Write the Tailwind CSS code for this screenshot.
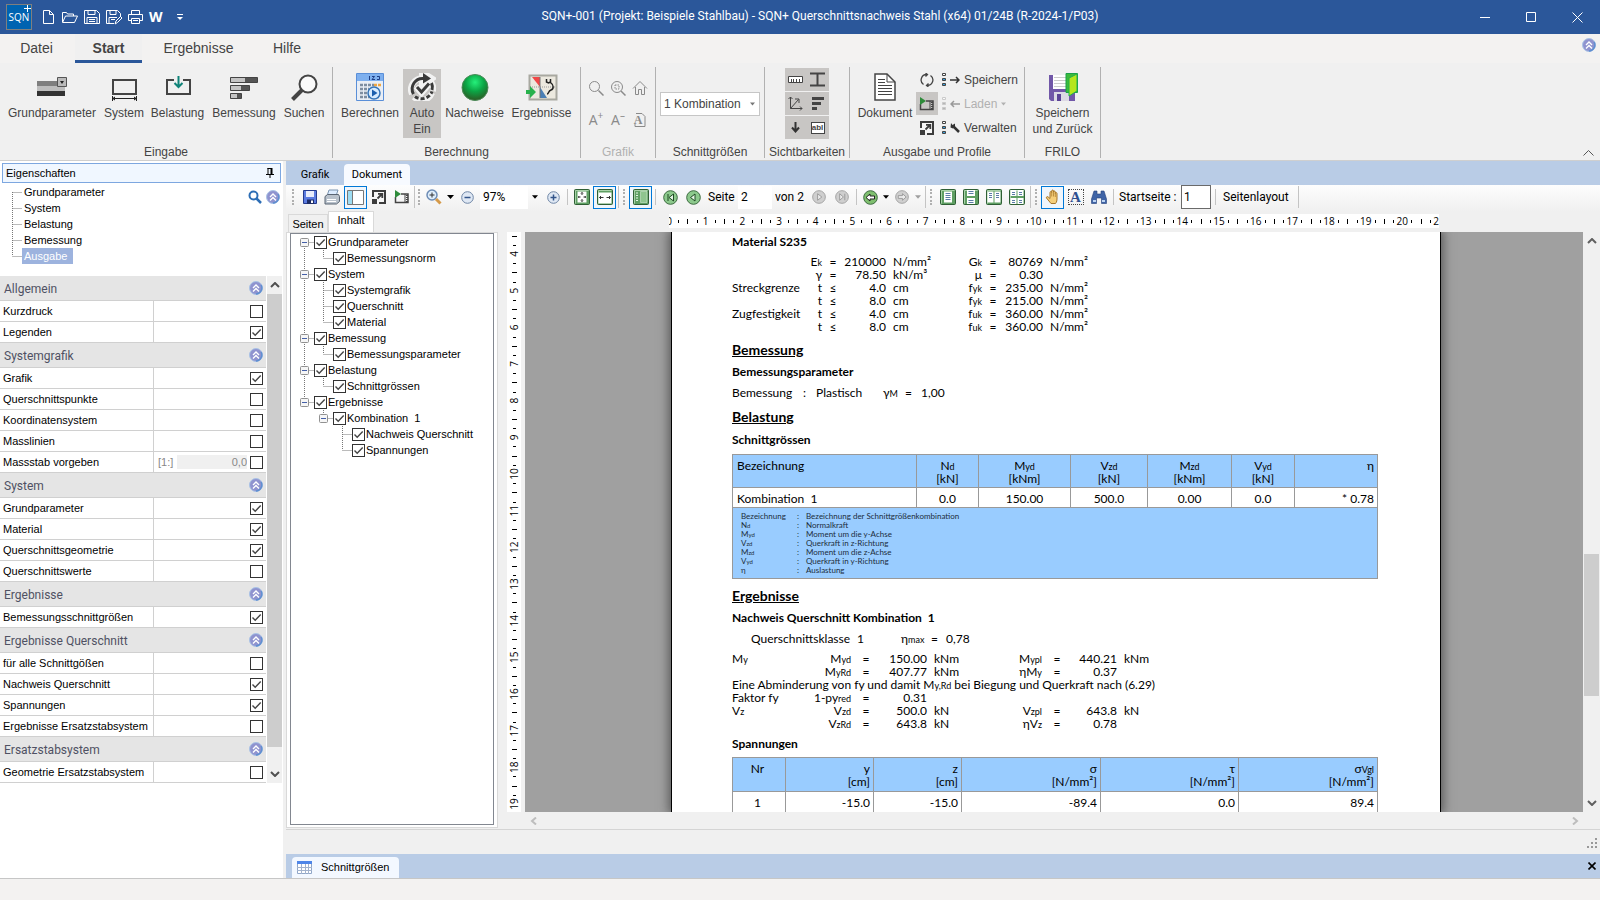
<!DOCTYPE html>
<html lang="de">
  <head>
    <meta charset="UTF-8" />
    <meta name="viewport" content="width=device-width, initial-scale=1.0" />
    <title>SQN+ Querschnittsnachweis Stahl</title>
    <script src="https://cdn.jsdelivr.net/npm/@tailwindcss/browser@4"></script>
  </head>
  <body class="flex h-screen flex-col overflow-hidden bg-[#f0f0f0] font-['Liberation_Sans',sans-serif] text-xs text-[#444]">

    <!-- Shared symbols -->
    <svg class="hidden">
      <symbol id="collapse" viewBox="0 0 14 14">
        <circle cx="7" cy="7" r="6.5" fill="#8f93cf" stroke="#a9c3e6" />
        <path d="M12 4a6 6 0 0 1-5 9" fill="none" stroke="#5f8fd0" stroke-width="1.4" />
        <path d="M4 7l3-3 3 3M4 10.5l3-3 3 3" fill="none" stroke="#fff" stroke-width="1.4" />
      </symbol>
      <symbol id="check" viewBox="0 0 13 13"><path d="M2.5 6.5l2.7 2.7L10.7 3.6" fill="none" stroke="#444" stroke-width="1.4" /></symbol>
      <symbol id="caret" viewBox="0 0 7 4"><path d="M0 0h7L3.5 4z" fill="currentColor" /></symbol>
      <symbol id="arrow-up" viewBox="0 0 10 6"><path d="M1 5l4-4 4 4" fill="none" stroke="currentColor" stroke-width="2" /></symbol>
      <symbol id="arrow-down" viewBox="0 0 10 6"><path d="M1 1l4 4 4-4" fill="none" stroke="currentColor" stroke-width="2" /></symbol>
      <symbol id="film" viewBox="0 0 16 14">
        <path d="M1.500 7v5.5h12.500V4H7" fill="none" stroke="#444" stroke-width="1.5" />
        <path d="M11 4v8.500" stroke="#444" />
        <path d="M13 5v7" stroke="#444" stroke-width="2" stroke-dasharray="1 1" />
        <path d="M1 0l6 4-6 4z" fill="#2e8b3a" />
      </symbol>
      <symbol id="resize" viewBox="0 0 14 14">
        <path d="M1 7V1h12v12H7" fill="#f6f6f6" stroke="#3c3c3c" stroke-width="2" />
        <path d="M0 9h5v5H0z" fill="#3c3c3c" />
        <path d="M5.500 8.500L10 4M6 3.800h4.300V8" fill="none" stroke="#3c3c3c" stroke-width="1.800" />
      </symbol>
      <symbol id="slots" viewBox="0 0 4 13">
        <path d="M.5 .5h3v2h-3z" fill="#fff" stroke="currentColor" />
        <path d="M.5 5.5h3v2h-3zM.5 10.5h3v2h-3z" fill="#39a0dc" stroke="currentColor" />
      </symbol>
      <symbol id="line-first" viewBox="0 0 19 16"><path d="M9.5 8v8M9.5 8.5h9.5" stroke="#777" stroke-dasharray="1 1" fill="none" /></symbol>
      <symbol id="line-v" viewBox="0 0 19 16"><path d="M9.5 0v16" stroke="#777" stroke-dasharray="1 1" /></symbol>
      <symbol id="line-t" viewBox="0 0 19 16"><path d="M9.5 0v16M9.5 8.5h9.5" stroke="#777" stroke-dasharray="1 1" /></symbol>
      <symbol id="line-l" viewBox="0 0 19 16"><path d="M9.5 0v8M9.5 8.5h9.5" stroke="#777" stroke-dasharray="1 1" /></symbol>
      <symbol id="box" viewBox="0 0 19 16"><rect x="5.5" y="4.5" width="8" height="8" rx="1" fill="#f6f6f6" stroke="#919191" /><path d="M7 8.5h5" stroke="#4560a8" /></symbol>
      <symbol id="page-green" viewBox="0 0 16 16"><rect x=".5" y=".5" width="15" height="15" rx="1" fill="#5f9f63" stroke="#2f5f35" /><path d="M1.5 14.5V1.5h13" stroke="#a9d2a9" fill="none" /></symbol>
    </svg>

    <!-- Title bar -->
    <header class="flex h-[34px] shrink-0 items-center bg-[#2b579a] text-white">
      <div class="flex w-[184px] items-center pl-1.5">
        <div class="relative flex size-[26px] items-center justify-center border border-[#7f7f7f] bg-[#0063b1] font-['Open_Sans',sans-serif] text-[10px] leading-none">SQN
          <svg class="absolute top-0 right-0 size-[7px]" viewBox="0 0 7 7"><path d="M3.5 0v7M0 3.5h7" stroke="#fff" /></svg>
        </div>
        <button aria-label="Neu" class="ml-[11px]"><svg class="h-4 w-[11px]" viewBox="0 0 11 16" fill="none" stroke="#fff"><path d="M.5 1.5h6l4 4v9H.5zM6.5 1.5v4h4" /></svg></button>
        <button aria-label="Öffnen" class="ml-2"><svg class="h-4 w-4" viewBox="0 0 16 16" fill="none" stroke="#fff"><path d="M.5 13V3.5h4l1 1.5h6v2M.5 13.5L3.5 7h12l-3 6.5z" /></svg></button>
        <button aria-label="Speichern" class="ml-1.5"><svg class="h-4 w-4" viewBox="0 0 16 16" fill="none" stroke="#fff"><path d="M.5 1.5h12l3 3v10H.5zM4 1.5v4h7v-4M3 14.5v-6h10v6M5 10.5h6M5 12.5h6" /></svg></button>
        <button aria-label="Speichern unter" class="ml-1.5"><svg class="h-4 w-[17px]" viewBox="0 0 17 16" fill="none" stroke="#fff"><path d="M8 14.5H.5v-13h11l3 3V8M4 1.5v4h6v-4M3 14.5v-6h8M5 10.5h4M9 15l1-3 4.5-4.5 1.5 1.5-4.5 4.5z" /></svg></button>
        <button aria-label="Drucken" class="ml-[5px]"><svg class="h-4 w-[15px]" viewBox="0 0 15 16" fill="none" stroke="#fff"><path d="M3.5 11.5h-3v-6h14v6h-3M3.5 5.5v-4h8v4M3.5 9.5h8v5h-8zM5 11.5h5" /></svg></button>
        <button class="ml-1.5 font-['Open_Sans',sans-serif] text-sm leading-none font-bold">W</button>
        <button aria-label="Anpassen" class="ml-[14px]"><svg class="h-[7px] w-[6px]" viewBox="0 0 6 7"><path d="M0 .5h6" stroke="#fff" /><path d="M0 3h6L3 6z" fill="#fff" /></svg></button>
      </div>
      <h1 class="flex-1 pr-1.5 pb-0.5 text-center font-[Roboto,sans-serif] text-xs">SQN+-001 (Projekt: Beispiele Stahlbau) - SQN+ Querschnittsnachweis Stahl (x64) 01/24B (R-2024-1/P03)</h1>
      <div class="flex">
        <button aria-label="Minimieren" class="flex h-[34px] w-[46px] items-center justify-center"><svg class="size-[11px]" viewBox="0 0 11 11"><path d="M0 5.5h10" stroke="#fff" /></svg></button>
        <button aria-label="Maximieren" class="flex h-[34px] w-[46px] items-center justify-center"><svg class="size-[11px]" viewBox="0 0 11 11" fill="none"><path d="M.5 .5h9v9h-9z" stroke="#fff" /></svg></button>
        <button aria-label="Schließen" class="flex h-[34px] w-[46px] items-center justify-center"><svg class="size-[11px]" viewBox="0 0 11 11"><path d="M.5 .5l10 10M10.5 .5l-10 10" stroke="#fff" /></svg></button>
      </div>
    </header>

    <!-- Ribbon tabs -->
    <nav class="flex h-[29px] shrink-0 items-stretch bg-[#f3f2f1] text-sm">
      <button class="w-[75px] pr-0.5 pb-0.5">Datei</button>
      <button class="w-[67px] border-b-[3px] border-[#2b579a] bg-[#f0f0f0] pt-0.5 font-bold">Start</button>
      <button class="w-[113px] pb-0.5">Ergebnisse</button>
      <button class="w-[64px] pb-0.5">Hilfe</button>
      <button aria-label="Menüband" class="mr-1 ml-auto self-start pt-1"><svg class="size-[14px]"><use href="#collapse" /></svg></button>
    </nav>

    <!-- Ribbon -->
    <section class="flex h-[98px] shrink-0 border-b border-[#cfcfcf] pt-1">
      <div class="flex h-[91px] w-[333px] flex-col justify-between border-r border-[#b1b1b1] pl-1">
        <div class="flex leading-4">
          <button class="flex w-24 flex-col items-center">
            <svg class="mt-1.5 mb-1 h-7 w-8" viewBox="0 0 32 28"><path d="M1 8h28v5H1z" fill="#7f7f7f" /><path d="M1 13h28v5H1z" fill="#bdbdbd" /><path d="M1 18h28v5H1z" fill="#333" /><path d="M21.5 4.5h9v9h-9z" fill="#bbb" stroke="#555" /><path d="M24 8h4l-2 3z" fill="#222" /></svg>
            Grundparameter
          </button>
          <button class="flex w-12 flex-col items-center">
            <svg class="mt-1.5 mb-1 h-7 w-8" viewBox="0 0 32 28" fill="none"><path d="M5 7h23v14H5z" stroke="#444" stroke-width="2" /><path d="M4 25.5h25M4.500 23v5M28.500 23v5" stroke="#222" /><path d="M4 25.5l3-2v4zM29 25.5l-3-2v4z" fill="#222" /></svg>
            System
          </button>
          <button class="flex w-[59px] flex-col items-center">
            <svg class="mt-1.5 mb-1 h-7 w-8" viewBox="0 0 32 28" fill="none"><path d="M12 7H5v14h23V7h-7" stroke="#444" stroke-width="2" /><path d="M16.5 3v11M12.5 10l4 4 4-4" stroke="#0f8378" stroke-width="2" /></svg>
            Belastung
          </button>
          <button class="flex w-[74px] flex-col items-center">
            <svg class="mt-1.5 mb-1 h-7 w-8" viewBox="0 0 32 28"><path d="M2.5 4.5h27v5h-27zM2.5 12.5h19v5h-19zM2.5 20.5h11v5h-11z" fill="#555" stroke="#444" /><path d="M3 5h14v4H3zM3 13h10v4H3zM3 21h6v4H3z" fill="#c4c4c4" /></svg>
            Bemessung
          </button>
          <button class="flex w-[46px] flex-col items-center">
            <svg class="mt-1.5 mb-1 h-7 w-7" viewBox="0 0 28 28" fill="none"><circle cx="18" cy="11" r="8.5" fill="#fafafa" stroke="#444" stroke-width="2" /><path d="M12 17l-9.5 9.5" stroke="#444" stroke-width="4" /></svg>
            Suchen
          </button>
        </div>
        <p class="pr-1 text-center leading-3">Eingabe</p>
      </div>

      <div class="flex h-[91px] w-[248px] flex-col justify-between border-r border-[#b1b1b1]">
        <div class="flex pl-1 leading-4">
          <button class="flex w-[66px] flex-col items-center">
            <svg class="mt-1.5 mb-1 h-7 w-7" viewBox="0 0 28 28"><path d="M.5 .5h27v27H.5z" fill="#e9eef5" stroke="#5a8fd8" /><path d="M1 1h26v7H1z" fill="#7eb0ef" /><path d="M13.5 3v4M16 3.5h2.5L16 6.500h3M21 3.500h2.5v3H21" stroke="#1d3f86" fill="none" /><path d="M4 12h14M4 16h9M4 20h8M4 24h20" stroke="#7d8da0" stroke-width="2.5" stroke-dasharray="3 1" /><path d="M18 12h7" stroke="#f0a640" stroke-width="2.5" stroke-dasharray="3 1" /><circle cx="18" cy="20" r="6" fill="#d6ebff" stroke="#3474b8" stroke-width="1.5" /><path d="M16 16.5l5.5 3.5-5.5 3.5z" fill="#1b5fae" /></svg>
            Berechnen
          </button>
          <button class="mt-0.5 flex h-[69px] w-[38px] flex-col items-center bg-[#c8c6c4]">
            <svg class="my-1 h-7 w-7" viewBox="0 0 28 28" fill="none"><path d="M4 21A11 11 0 0 1 15 5.500M23 9a11 11 0 0 1 2 9M6 24a11 11 0 0 0 18-4" stroke="#f2f2f2" stroke-width="6" /><path d="M14 -1l10 6.500-10 6.500zM8 13.500l5.500 6.500 9-10.500" fill="#f2f2f2" stroke="#f2f2f2" stroke-width="6" /><path d="M5.500 21A10.5 10.5 0 0 1 16 5.500M23.500 10a10 10 0 0 1 .5 7" stroke="#3a3a3a" stroke-width="3" /><path d="M15 0l8 5.500-8 5z" fill="#3a3a3a" /><path d="M7 23.500a11 11 0 0 0 17-5" stroke="#3a3a3a" stroke-width="3" stroke-dasharray="4 2" /><path d="M9 14l4.500 5 7.500-8.500" stroke="#3a3a3a" stroke-width="3" /></svg>
            Auto<br />Ein
          </button>
          <button class="flex w-[67px] flex-col items-center">
            <svg class="mt-1.5 mb-1 h-7 w-7" viewBox="0 0 28 28"><defs><radialGradient id="ball" cx=".5" cy=".3" r=".7"><stop offset="0" stop-color="#25f07a" /><stop offset=".5" stop-color="#0ba545" /><stop offset="1" stop-color="#2c5a24" /></radialGradient></defs><circle cx="14" cy="14.5" r="13" fill="url(#ball)" stroke="#4c8a58" /></svg>
            Nachweise
          </button>
          <button class="flex w-[67px] flex-col items-center">
            <svg class="mt-1.5 mb-1 h-7 w-8" viewBox="0 0 32 28"><path d="M3.5 2.500h27v24h-27z" fill="#ece9df" stroke="#a8a8a0" stroke-width="2" /><path d="M4 14h26" stroke="#999" stroke-dasharray="1 1" /><path d="M6 4h8v10z" fill="#f04848" /><path d="M14 14l7 11h-7z" fill="#4a7fb5" /><path d="M14 4v21" stroke="#777" /><path d="M20.500 6v3l2 1 2-1V6M24 9c4 3 4 7 1 8s-2 4-4 4" stroke="#222" stroke-width="1.5" fill="none" /><path d="M0 17h4v-4l6 6-6 6v-4H0z" fill="#28b14c" /></svg>
            Ergebnisse
          </button>
        </div>
        <p class="text-center leading-3">Berechnung</p>
      </div>

      <div class="flex h-[91px] w-[75px] flex-col justify-between border-r border-[#b1b1b1]">
        <div class="grid grid-cols-3 gap-y-2 px-1 pt-[9px] font-['Open_Sans',sans-serif] text-[#8a8a8a]">
          <button aria-label="Zoom" class="flex h-6 items-center justify-center"><svg class="size-4" viewBox="0 0 16 16" fill="none" stroke="#8a8a8a"><circle cx="6.5" cy="6.5" r="5" /><path d="M10.5 10.5l5 5" stroke-width="1.5" /></svg></button>
          <button aria-label="Einpassen" class="flex h-6 items-center justify-center"><svg class="size-4" viewBox="0 0 16 16" fill="none" stroke="#8a8a8a"><circle cx="7" cy="7" r="5.5" /><path d="M5 5h4v4H5z" stroke-dasharray="1.5 1" /><path d="M11 11l4.5 4.5" stroke-width="1.5" /></svg></button>
          <button aria-label="Start" class="flex h-6 items-center justify-center"><svg class="size-4" viewBox="0 0 16 16" fill="none" stroke="#8a8a8a"><path d="M1 8.5l7-7 7 7M3.5 7v7.5h3v-5h3v5h3V7" /></svg></button>
          <button class="flex h-6 items-center justify-center text-sm">A<sup class="text-[10px]">+</sup></button>
          <button class="flex h-6 items-center justify-center text-sm">A<sup class="text-[10px]">–</sup></button>
          <button class="flex h-6 items-center justify-center"><span class="-mr-2 font-['Liberation_Serif',serif] text-xs font-bold">A</span><svg class="h-4 w-3" viewBox="0 0 12 16" fill="none" stroke="#8a8a8a"><path d="M2 1.5h6l3 3v10H1V12" /></svg></button>
        </div>
        <p class="text-center leading-3 text-[#b1b1b1]">Grafik</p>
      </div>

      <div class="flex h-[91px] w-[109px] flex-col justify-between border-r border-[#b1b1b1]">
        <div class="relative px-1 pt-[25px]">
          <select aria-label="Schnittgrößen" class="h-6 w-full appearance-none border border-[#c6c6c6] bg-white pl-[3px]"><option>1 Kombination</option></select>
          <svg class="pointer-events-none absolute top-[35px] right-[9px] h-1 w-[5px] text-[#777]"><use href="#caret" /></svg>
        </div>
        <p class="text-center leading-3">Schnittgrößen</p>
      </div>

      <div class="flex h-[91px] w-[85px] flex-col justify-between border-r border-[#b1b1b1]">
        <div class="mx-auto mt-px grid grid-cols-2 gap-y-px pr-px">
          <button aria-label="Maße" class="flex h-[23px] w-[22px] items-center justify-center bg-[#c8c6c4]"><svg class="h-[7px] w-[15px]" viewBox="0 0 15 7"><path d="M.5 .5h14v6H.5z" fill="#fff" stroke="#444" /><path d="M3.5 3v4M5.5 3v4M8.5 3v4M11.5 3v4" stroke="#444" /></svg></button>
          <button aria-label="Profil" class="flex h-[23px] w-[22px] items-center justify-center bg-[#c8c6c4]"><svg class="size-[15px]" viewBox="0 0 15 15"><path d="M0 1.5h15M0 13.5h15M7.5 1v13" stroke="#444" stroke-width="2" /></svg></button>
          <button aria-label="Achsen" class="flex h-[23px] w-[22px] items-center justify-center bg-[#c8c6c4]"><svg class="size-[15px]" viewBox="0 0 15 15" fill="none" stroke="#444"><path d="M2.5 1v11.5H14M2.5 12.5l8-9M7 3h4v4M.5 3l2-2 2 2M12 10.5l2 2-2 2" /></svg></button>
          <button aria-label="Balken" class="flex h-[23px] w-[22px] items-center justify-center bg-[#c8c6c4]"><svg class="h-[13px] w-[12px]" viewBox="0 0 12 13"><path d="M0 0h12v3H0zM0 5h9v3H0zM0 10h5v3H0z" fill="#444" /></svg></button>
          <button aria-label="Lasten" class="flex h-[23px] w-[22px] items-center justify-center bg-[#c8c6c4]"><svg class="h-[11px] w-[9px]" viewBox="0 0 9 11" fill="none" stroke="#333" stroke-width="2"><path d="M4.5 0v9M1 5.5L4.5 9.500 8 5.500" /></svg></button>
          <button class="flex h-[23px] w-[22px] items-center justify-center bg-[#c8c6c4]"><span class="flex h-3 w-[14px] items-center justify-center border border-[#444] bg-white text-[8px] leading-none font-bold">abl</span></button>
        </div>
        <p class="text-center leading-3">Sichtbarkeiten</p>
      </div>

      <div class="flex h-[91px] w-[175px] flex-col justify-between border-r border-[#b1b1b1]">
        <div class="flex pl-1">
          <button class="flex w-[62px] flex-col items-center leading-4">
            <svg class="mt-1.5 mb-1 h-7 w-[22px]" viewBox="0 0 22 28" fill="none" stroke="#444"><path d="M1 1h12l8 8v18H1z" fill="#fff" stroke-width="1.5" /><path d="M13 1v8h8M4 6.5h7M4 9.5h7M4 12.5h14M4 15.5h14M4 18.5h14M4 21.5h14" /></svg>
            Dokument
          </button>
          <div class="mt-px flex w-[22px] flex-col gap-px">
            <button aria-label="Aktualisieren" class="flex h-[23px] items-center justify-center"><svg class="size-[14px]" viewBox="0 0 14 14" fill="none" stroke="#444" stroke-width="1.3"><path d="M3.500 11.500A5.500 5.500 0 0 1 7 1.500M10.500 2.500A5.500 5.500 0 0 1 7 12.500M5.500 0L7.500 1.600 5.500 3.500M8.500 10.500L6.500 12.400 8.500 14" /></svg></button>
            <button aria-label="Vorschau" class="flex h-[23px] items-center justify-center bg-[#c8c6c4]"><svg class="h-[14px] w-4"><use href="#film" /></svg></button>
            <button aria-label="Vollbild" class="flex h-[23px] items-center justify-center"><svg class="size-[14px]"><use href="#resize" /></svg></button>
          </div>
          <div class="mt-px ml-1 flex flex-col gap-px">
            <button class="flex h-[23px] items-center gap-1"><svg class="h-[13px] w-1"><use href="#slots" /></svg><svg class="h-2 w-[10px]" viewBox="0 0 10 8" fill="none" stroke="#333" stroke-width="1.5"><path d="M0 4h9M6 1l3 3-3 3" /></svg>Speichern</button>
            <button disabled class="flex h-[23px] items-center gap-1 text-[#b1b1b1]"><svg class="h-[13px] w-1 opacity-60 grayscale"><use href="#slots" /></svg><svg class="h-2 w-[10px]" viewBox="0 0 10 8" fill="none" stroke="#999" stroke-width="1.5"><path d="M1 4h9M4 1L1 4l3 3" /></svg>Laden<svg class="h-1 w-[5px]"><use href="#caret" /></svg></button>
            <button class="flex h-[23px] items-center gap-1"><svg class="h-[13px] w-1"><use href="#slots" /></svg><svg class="size-[10px]" viewBox="0 0 10 10" fill="none"><path d="M4 4l5 5" stroke="#333" stroke-width="2.5" /><path d="M1 0l1.5 2L5 .5V4L3 5.500.5 4.500z" fill="#333" /></svg>Verwalten</button>
          </div>
        </div>
        <p class="text-center leading-3">Ausgabe und Profile</p>
      </div>

      <div class="flex h-[91px] w-[76px] flex-col justify-between border-r border-[#b1b1b1]">
        <button class="flex flex-col items-center leading-4">
          <svg class="mt-1.5 mb-1 h-7 w-[30px]" viewBox="0 0 30 28"><path d="M1 2h26v26H3l-2-2z" fill="#7157a8" /><path d="M5 2h16v14H5z" fill="#fff" /><path d="M6 4.5h13M6 7.5h13M6 10.5h13M6 13.5h13" stroke="#ccc" /><path d="M6 19h15v9H6z" fill="#dcd9e4" /><path d="M9 21h4v7H9z" fill="#5b4296" /><path d="M18 .5h11.5v19H18z" fill="#3dbb3a" stroke="#1aa04a" /><path d="M21 5l8-4v17l-8 5z" fill="#b5e61d" stroke="#22b14c" /></svg>
          Speichern<br />und Zurück
        </button>
        <p class="text-center leading-3">FRILO</p>
      </div>
      <button aria-label="Menüband reduzieren" class="mr-1.5 mb-1 ml-auto self-end text-[#555]"><svg class="h-1.5 w-[11px]" viewBox="0 0 11 6"><path d="M.5 5.500l5-5 5 5" fill="none" stroke="#555" /></svg></button>
    </section>

    <main class="flex min-h-0 flex-1">

      <!-- Properties panel -->
      <aside class="mr-[3px] flex w-[283px] shrink-0 flex-col bg-white text-[11px] text-black">
        <div class="mx-0.5 mt-0.5 flex h-5 items-center justify-between border border-[#7da7e0] bg-[#f0f7ff] px-[3px] pr-1.5">
          <h2>Eigenschaften</h2>
          <svg class="h-[10px] w-2" viewBox="0 0 8 10" fill="none" stroke="#000"><path d="M2 0v6M1.5 .5h4M0 6.5h8M4 7v3" /><path d="M5.5 0v6" stroke-width="2" /></svg>
        </div>
        <div class="flex h-[93px] justify-between">
          <ul id="nav-tree" class="pt-px pl-[3px]"></ul>
          <div class="flex gap-1 pt-[7px] pr-[3px]">
            <button aria-label="Suchen" class="size-[14px]"><svg class="size-[14px]" viewBox="0 0 14 14" fill="none" stroke="#2d6eb5"><circle cx="5.5" cy="5.5" r="4" stroke-width="2" /><path d="M8.5 8.5l4.5 4.5" stroke-width="2.5" /></svg></button>
            <button aria-label="Alle zuklappen" class="size-[14px]"><svg class="size-[14px]"><use href="#collapse" /></svg></button>
          </div>
        </div>
        <div class="flex">
          <div id="props" class="w-[266px]"></div>
          <div class="ml-px flex w-[15px] flex-col items-center bg-[#f0f0f0] text-[#505050]">
            <svg class="my-1.5 h-[6px] w-[10px] shrink-0"><use href="#arrow-up" /></svg>
            <div class="mb-6 w-full flex-1 bg-[#cdcdcd]"></div>
            <svg class="mb-1.5 h-[6px] w-[10px] shrink-0"><use href="#arrow-down" /></svg>
          </div>
        </div>
      </aside>

      <div class="flex min-w-0 flex-1 flex-col">
        <!-- View tabs -->
        <div class="flex h-6 shrink-0 items-end bg-[#b9cce6] font-[Roboto,sans-serif] text-[11px] text-black">
          <button class="h-[21px] w-[58px] leading-[19px]">Grafik</button>
          <button class="h-[21px] w-[66px] rounded-t bg-[#f7faff] leading-[19px]">Dokument</button>
        </div>

        <!-- Document toolbar -->
        <div class="flex h-[26px] shrink-0 items-center bg-linear-to-b from-[#fdfdfd] to-[#f0f0f0] pb-0.5 font-[Roboto,sans-serif] text-xs text-black *:shrink-0">
          <i class="mr-1 ml-1.5 h-4 w-0.5 border-l-2 border-dotted border-[#b0b0b0]"></i>
          <button aria-label="Speichern" class="flex size-[23px] items-center justify-center"><svg class="size-[14px]" viewBox="0 0 14 14"><path d="M.5 .5h13v13H.5z" fill="#5b7be0" stroke="#243a8c" /><path d="M3 1h8v6H3z" fill="#e8ecfa" /><path d="M4 9.5h7V14H4z" fill="#1d2c66" /><path d="M8 10.5h2V13H8z" fill="#fff" /></svg></button>
          <button aria-label="Drucken" class="flex size-[23px] items-center justify-center pr-0.5"><svg class="size-4" viewBox="0 0 16 16"><path d="M5 1h9l-2 6H3z" fill="#dcecff" stroke="#7a94b0" /><path d="M1 7.500L3.500 5.500h11l1 2v5l-3 2.500H1z" fill="#b9c2cc" stroke="#596472" /><path d="M3 10.5h9M3 12.5h9" stroke="#fff" /></svg></button>
          <button aria-label="Navigation" class="flex size-[23px] items-center justify-center border border-[#0078d7] bg-[#f0f6fc]"><svg class="h-[15px] w-[17px]" viewBox="0 0 17 15"><path d="M.5 .5h16v14H.5z" fill="#fff" stroke="#777" /><path d="M1 1h4v13H1z" fill="#9ddcf2" /><path d="M5.5 1v13" stroke="#777" /></svg></button>
          <button aria-label="Vollbild" class="flex size-[23px] items-center justify-center"><svg class="size-[14px]"><use href="#resize" /></svg></button>
          <button aria-label="Vorschau" class="flex size-[23px] items-center justify-center"><svg class="h-[14px] w-4"><use href="#film" /></svg></button>
          <i class="mx-px h-[22px] w-px bg-[#c4c4c4]"></i>
          <i class="mx-0.5 h-4 w-0.5 border-l-2 border-dotted border-[#b0b0b0]"></i>
          <button aria-label="Zoom" class="flex size-[23px] items-center justify-center"><svg class="size-4" viewBox="0 0 16 16" fill="none"><circle cx="6" cy="6" r="5" fill="#dfeefc" stroke="#6d8cb5" stroke-width="1.5" /><path d="M6 3.5v5M3.5 6h5" stroke="#333" /><path d="M10 10l4.5 4.5" stroke="#d59a4a" stroke-width="3" /></svg></button>
          <svg class="mx-0.5 h-1 w-[7px]"><use href="#caret" /></svg>
          <button aria-label="Verkleinern" class="flex size-[23px] items-center justify-center"><svg class="size-[13px]" viewBox="0 0 13 13"><circle cx="6.5" cy="6.5" r="5.8" fill="#dfe8f4" stroke="#6f86a6" /><path d="M3.5 6.5h6" stroke="#33558a" stroke-width="1.5" /></svg></button>
          <input aria-label="Zoomstufe" value="97%" class="ml-px h-[23px] w-12 bg-white pl-[3px]" />
          <svg class="mx-1 h-1 w-[6px]"><use href="#caret" /></svg>
          <button aria-label="Vergrößern" class="flex size-[23px] items-center justify-center"><svg class="size-[13px]" viewBox="0 0 13 13"><circle cx="6.5" cy="6.5" r="5.8" fill="#dfe8f4" stroke="#6f86a6" /><path d="M3.5 6.5h6M6.5 3.5v6" stroke="#33558a" stroke-width="1.5" /></svg></button>
          <i class="mx-0.5 h-4 w-px bg-[#c4c4c4]"></i>
          <button aria-label="Ganze Seite" class="flex size-[23px] items-center justify-center"><svg class="size-4" viewBox="0 0 16 16"><use href="#page-green" /><path d="M3.5 2.5h9v11h-9z" fill="#fff" /><path d="M8 3.5v2.5M8 10v2.5M4.5 8h2M9.5 8h2M7 4.5l1-1 1 1M7 11.5l1 1 1-1M5 7L4.5 8 5 9M11 7l.5 1-.5 1" stroke="#333" fill="none" /></svg></button>
          <button aria-label="Seitenbreite" class="flex size-[23px] items-center justify-center border border-[#0078d7] bg-[#f0f6fc]"><svg class="size-4" viewBox="0 0 16 16"><use href="#page-green" /><path d="M1.5 3.5h13v11h-13z" fill="#fff" /><path d="M2.5 8.5h4M9.5 8.5h4M4 7L2.5 8.5 4 10M12 7l1.5 1.5L12 10" stroke="#333" fill="none" /></svg></button>
          <i class="mx-0.5 h-[22px] w-px bg-[#c4c4c4]"></i>
          <i class="mr-1 ml-0.5 h-4 w-0.5 border-l-2 border-dotted border-[#b0b0b0]"></i>
          <button aria-label="Miniaturen" class="flex size-[23px] items-center justify-center border border-[#0078d7] bg-[#f0f6fc]"><svg class="size-4" viewBox="0 0 16 16"><use href="#page-green" /><path d="M7.5 2.5h6.5v11H7.5z" fill="#8fc58f" stroke="#dff0df" stroke-width=".5" /><path d="M3 4h2M3 6.5h2M3 9h2M3 11.5h2" stroke="#e4f5e4" /></svg></button>
          <i class="mx-[3px] h-4 w-px bg-[#c4c4c4]"></i>
          <button aria-label="Erste Seite" class="flex size-[23px] items-center justify-center"><svg class="size-[15px]" viewBox="0 0 15 15"><circle cx="7.5" cy="7.5" r="6.8" fill="#8cc98c" stroke="#3c6b3f" /><path d="M5 4v7M10.5 4v7L6 7.5z" fill="#e3f5e3" stroke="#1f4a23" /></svg></button>
          <button aria-label="Vorherige Seite" class="flex size-[23px] items-center justify-center"><svg class="size-[15px]" viewBox="0 0 15 15"><circle cx="7.5" cy="7.5" r="6.8" fill="#8cc98c" stroke="#3c6b3f" /><path d="M9 4v7L4.5 7.5z" fill="#e3f5e3" stroke="#1f4a23" /></svg></button>
          <label for="page" class="w-[33px] pl-[3px]">Seite</label>
          <input id="page" value="2" class="h-[23px] w-[34px] bg-white pl-[3px]" />
          <span class="w-[35px] pl-[3px]">von 2</span>
          <button disabled aria-label="Nächste Seite" class="flex size-[23px] items-center justify-center"><svg class="size-[14px]" viewBox="0 0 15 15"><circle cx="7.5" cy="7.5" r="6.8" fill="#cfcfcf" stroke="#a0a0a0" /><path d="M6 4v7l4.5-3.5z" fill="#ececec" stroke="#999" /></svg></button>
          <button disabled aria-label="Letzte Seite" class="flex size-[23px] items-center justify-center"><svg class="size-[14px]" viewBox="0 0 15 15"><circle cx="7.5" cy="7.5" r="6.8" fill="#cfcfcf" stroke="#a0a0a0" /><path d="M5 4v7l4-3.5zM10.5 4v7" fill="#ececec" stroke="#999" /></svg></button>
          <i class="mr-0.5 ml-[3px] h-4 w-px bg-[#c4c4c4]"></i>
          <button aria-label="Zurück" class="flex size-[23px] items-center justify-center"><svg class="size-[15px]" viewBox="0 0 15 15"><circle cx="7.5" cy="7.5" r="6.8" fill="#7fbf6f" stroke="#3c6b3f" /><path d="M3 7.5l4-3.5v2h4.5v3H7v2z" fill="#fff" stroke="#222" /></svg></button>
          <svg class="mx-px h-1 w-[6px]"><use href="#caret" /></svg>
          <button disabled aria-label="Vor" class="flex size-[23px] items-center justify-center"><svg class="size-[14px]" viewBox="0 0 15 15"><circle cx="7.5" cy="7.5" r="6.8" fill="#cfcfcf" stroke="#a0a0a0" /><path d="M12 7.5L8 4v2H3.5v3H8v2z" fill="#ececec" stroke="#999" /></svg></button>
          <svg class="mx-0.5 h-1 w-[6px] text-[#a0a0a0]"><use href="#caret" /></svg>
          <i class="mx-0.5 h-[22px] w-px bg-[#c4c4c4]"></i>
          <i class="mr-1 ml-0.5 h-4 w-0.5 border-l-2 border-dotted border-[#b0b0b0]"></i>
          <button aria-label="Einzelseite" class="flex size-[23px] items-center justify-center"><svg class="size-4" viewBox="0 0 16 16"><use href="#page-green" /><path d="M4 2.5h8v11H4z" fill="#fff" /><path d="M5.5 4.5h5M5.5 6.5h5M5.5 8.5h5M5.5 10.5h5" stroke="#5a7ca6" /></svg></button>
          <button aria-label="Fortlaufend" class="flex size-[23px] items-center justify-center"><svg class="size-4" viewBox="0 0 16 16"><use href="#page-green" /><path d="M4 1h8v6H4zM4 9h8v6H4z" fill="#fff" /><path d="M5.5 2.5h5M5.5 4.5h5M5.5 11.5h5M5.5 13.5h5" stroke="#5a7ca6" /></svg></button>
          <button aria-label="Doppelseite" class="flex size-[23px] items-center justify-center"><svg class="size-4" viewBox="0 0 16 16"><use href="#page-green" /><path d="M1.5 2.5h6v11h-6zM8.5 2.5h6v11h-6z" fill="#fff" /><path d="M3 4.5h3M3 6.5h3M3 8.5h3M10 4.5h3M10 6.5h3M10 8.5h3" stroke="#5a7ca6" /></svg></button>
          <button aria-label="Vier Seiten" class="flex size-[23px] items-center justify-center"><svg class="size-4" viewBox="0 0 16 16"><use href="#page-green" /><path d="M1.5 1h6v6h-6zM8.5 1h6v6h-6zM1.5 9h6v6h-6zM8.5 9h6v6h-6z" fill="#fff" /><path d="M3 3.5h3M3 5.5h3M10 3.5h3M10 5.5h3M3 11.5h3M3 13.5h3M10 11.5h3M10 13.5h3" stroke="#5a7ca6" /></svg></button>
          <i class="mx-0.5 h-[22px] w-px bg-[#c4c4c4]"></i>
          <i class="mr-1 ml-0.5 h-4 w-0.5 border-l-2 border-dotted border-[#b0b0b0]"></i>
          <button aria-label="Hand" class="flex size-[23px] items-center justify-center border border-[#0078d7] bg-[#f0f6fc]"><svg class="size-4" viewBox="0 0 16 16"><path d="M6 14.5L1.5 9c-.5-1.2.8-1.8 1.7-1L5 9.5V3.5c0-1.3 1.700-1.3 1.700 0V2c0-1.3 1.8-1.3 1.8 0v1c0-1.3 1.8-1.3 1.8 0v1.5c0-1.3 1.7-1.2 1.7 0V10c0 3-1.5 4.5-1.5 4.5z" fill="#f6cf7a" stroke="#a5752a" /><path d="M6.7 3.5v4M8.5 3v4.5M10.3 4.5v3.5" stroke="#a5752a" stroke-width=".7" /></svg></button>
          <button class="flex size-[23px] items-center justify-center"><span class="flex size-4 items-center justify-center border border-dotted border-[#444] font-['Liberation_Serif',serif] text-[15px] leading-none font-bold text-[#2d4f8f]">A</span></button>
          <button aria-label="Suchen" class="flex size-[23px] items-center justify-center"><svg class="size-4" viewBox="0 0 16 16"><path d="M3 2h3v3h4V2h3l2.5 8v4.5h-5V9h-5v5.5h-5V10z" fill="#3f64a6" stroke="#24407a" stroke-width=".6" /><path d="M2 12h3M11 12h3" stroke="#bcd3f2" stroke-width="2" /></svg></button>
          <i class="mx-[3px] h-4 w-px bg-[#c4c4c4]"></i>
          <label for="startpage" class="w-16 pl-0.5">Startseite :</label>
          <input id="startpage" value="1" class="h-6 w-[30px] border border-[#6a6a6a] bg-white pl-0.5" />
          <i class="mx-1 h-4 w-px bg-[#c4c4c4]"></i>
          <button class="px-[3px] text-left">Seitenlayout</button>
          <i class="ml-1.5 h-[22px] w-px bg-[#c4c4c4]"></i>
        </div>

        <div class="flex min-h-0 flex-1">
          <!-- Contents tree -->
          <div class="flex w-[212px] shrink-0 flex-col pb-px text-[11px] text-black">
            <div class="flex h-[21px] items-end pl-0.5">
              <button class="h-[18px] w-10 border border-b-0 border-[#d9d9d9] leading-4">Seiten</button>
              <button class="h-[21px] w-[46px] border border-b-0 border-[#d9d9d9] bg-white pb-1 leading-4">Inhalt</button>
            </div>
            <div class="flex-1 border border-[#d9d9d9] bg-white px-[3px] pb-0.5">
              <ul id="content-tree" class="h-full border border-[#828790] pl-1"></ul>
            </div>
          </div>

          <!-- Vertical ruler -->
          <div class="flex w-[27px] shrink-0 justify-center pt-[21px] pr-1 pb-[17px] pl-2">
            <svg id="ruler-v" class="h-full w-[14px] bg-white font-['Open_Sans',sans-serif] text-[10px] text-black"></svg>
          </div>

          <!-- Page view -->
          <div class="flex min-w-0 flex-1 flex-col">
            <div class="flex h-[21px] shrink-0 justify-center pt-[3px] pr-[17px]">
              <svg id="ruler-h" class="h-[14px] w-[770px] bg-white font-['Open_Sans',sans-serif] text-[10px] text-black"></svg>
            </div>
            <div class="flex min-h-0 flex-1">
              <div class="flex min-w-0 flex-1 justify-center overflow-hidden bg-[#a0a0a0] pl-1">
                <article class="w-[770px] border-x border-black bg-white px-[60px] pt-[3px] font-[Lato,sans-serif] text-xs leading-[13px] text-black shadow-[0_0_10px_2px_#555]">
                  <h4 class="leading-[14px] font-bold">Material S235</h4>
                  <div id="material" class="mt-1.5 grid grid-cols-[70px_20px_22px_42px_64px_32px_22px_39px_1fr]"></div>

                  <h3 class="mt-2 text-sm leading-[18px] font-bold underline">Bemessung</h3>
                  <h4 class="mt-1.5 leading-[14px] font-bold">Bemessungsparameter</h4>
                  <p class="mt-[7px] grid grid-cols-[71px_13px_67px_18px_20px_1fr] leading-[14px]"><span>Bemessung</span><span>:</span><span>Plastisch</span><span>γ<small class="text-[9px]">M</small></span><span class="pl-1">=</span><span>1,00</span></p>

                  <h3 class="mt-[7px] text-sm leading-[18px] font-bold underline">Belastung</h3>
                  <h4 class="mt-[7px] leading-[14px] font-bold">Schnittgrössen</h4>
                  <table class="mt-[7px] w-[646px] table-fixed border-collapse text-center [&_td]:border [&_td]:border-[#999] [&_th]:border [&_th]:border-[#999]">
                    <thead class="bg-[#99ccff]">
                      <tr class="h-[33px] align-top [&_small]:text-[9px] [&_small]:leading-none [&_th]:pt-1 [&_th]:font-normal">
                        <th class="w-[184px] pl-1 text-left">Bezeichnung</th>
                        <th class="w-[62px]">N<small>d</small><br />[kN]</th>
                        <th class="w-[92px]">M<small>yd</small><br />[kNm]</th>
                        <th class="w-[77px]">V<small>zd</small><br />[kN]</th>
                        <th class="w-[84px]">M<small>zd</small><br />[kNm]</th>
                        <th class="w-[63px]">V<small>yd</small><br />[kN]</th>
                        <th class="pr-[3px] text-right">η</th>
                      </tr>
                    </thead>
                    <tbody>
                      <tr class="h-5 [&_td]:pt-0.5">
                        <td class="pl-1 text-left whitespace-pre">Kombination  1</td>
                        <td>0.0</td>
                        <td>150.00</td>
                        <td>500.0</td>
                        <td>0.00</td>
                        <td>0.0</td>
                        <td class="pr-[3px] text-right">* 0.78</td>
                      </tr>
                      <tr class="h-[71px] bg-[#99ccff] align-top">
                        <td colspan="7" class="pt-1 pl-2 text-left">
                          <div id="legend" class="grid grid-cols-[56px_9px_1fr] text-[8px] leading-[9px] text-[#1c2c3c] [&_small]:text-[6px] [&_small]:leading-none"></div>
                        </td>
                      </tr>
                    </tbody>
                  </table>

                  <h3 class="mt-2 text-sm leading-[18px] font-bold underline">Ergebnisse</h3>
                  <h4 class="mt-1.5 leading-[14px] font-bold whitespace-pre">Nachweis Querschnitt Kombination  1</h4>
                  <p class="mt-[7px] grid grid-cols-[106px_44px_30px_15px_1fr] pl-[19px] leading-[14px]"><span>Querschnittsklasse</span><span>1</span><span>η<small class="text-[9px]">max</small></span><span>=</span><span>0,78</span></p>
                  <div id="results" class="mt-[5px] grid grid-cols-[80px_39px_30px_46px_65px_50px_30px_45px_1fr]"></div>

                  <h4 class="mt-[7px] leading-[14px] font-bold">Spannungen</h4>
                  <table class="mt-1.5 w-[646px] table-fixed border-collapse text-right [&_td]:border [&_td]:border-[#999] [&_td]:pr-[3px] [&_th]:border [&_th]:border-[#999] [&_th]:pr-[3px]">
                    <thead class="bg-[#99ccff]">
                      <tr class="h-[34px] align-top [&_small]:text-[9px] [&_small]:leading-none [&_th]:pt-1 [&_th]:font-normal">
                        <th class="w-[53px] text-center">Nr</th>
                        <th class="w-[88px]">y<br />[cm]</th>
                        <th class="w-[88px]">z<br />[cm]</th>
                        <th class="w-[139px]">σ<br />[N/mm²]</th>
                        <th class="w-[138px]">τ<br />[N/mm²]</th>
                        <th>σ<small>Vgl</small><br />[N/mm²]</th>
                      </tr>
                    </thead>
                    <tbody>
                      <tr class="h-[22px]">
                        <td class="text-center">1</td>
                        <td>-15.0</td>
                        <td>-15.0</td>
                        <td>-89.4</td>
                        <td>0.0</td>
                        <td>89.4</td>
                      </tr>
                    </tbody>
                  </table>
                </article>
              </div>
              <div class="ml-px flex w-4 flex-col items-center pr-px text-[#606060]">
                <svg class="mt-1.5 h-[6px] w-[10px] shrink-0"><use href="#arrow-up" /></svg>
                <div class="flex w-full flex-1 flex-col">
                  <div class="flex-[310]"></div>
                  <div class="flex-[142] bg-[#cdcdcd]"></div>
                  <div class="flex-[104]"></div>
                </div>
                <svg class="mb-1.5 h-[6px] w-[10px] shrink-0"><use href="#arrow-down" /></svg>
              </div>
            </div>
            <div class="flex h-[17px] shrink-0 items-center justify-between pr-[21px] pl-[5px]">
              <svg class="h-2 w-[7px]" viewBox="0 0 7 8"><path d="M6 .5L2 4l4 3.5" fill="none" stroke="#bdbdbd" stroke-width="2" /></svg>
              <svg class="h-2 w-[7px]" viewBox="0 0 7 8"><path d="M1 .5L5 4 1 7.5" fill="none" stroke="#bdbdbd" stroke-width="2" /></svg>
            </div>
          </div>
        </div>

        <div class="flex h-[25px] shrink-0 items-end justify-end border-t border-[#d4d4d4] pr-[3px] pb-1.5">
          <svg class="size-[10px]" viewBox="0 0 10 10" fill="#999"><path d="M8 0h2v2H8zM4 4h2v2H4zM8 4h2v2H8zM0 8h2v2H0zM4 8h2v2H4zM8 8h2v2H8z" /></svg>
        </div>
        <div class="flex h-6 shrink-0 items-end justify-between bg-[#b9cce6] pl-1.5">
          <button class="flex h-[21px] w-[107px] items-center gap-[9px] rounded-t bg-[#f3f8ff] pl-[5px] text-black">
            <svg class="h-[13px] w-[15px]" viewBox="0 0 15 13"><path d="M.5 .5h14v12H.5z" fill="#fff" stroke="#8fa6c8" /><path d="M0 0h15v3H0z" fill="#4f86e8" /><path d="M0 6.5h15M0 9.5h15M4.5 3v10M8.5 3v10M11.5 3v10" stroke="#a3b3cd" /></svg>
            <span class="text-[11px]">Schnittgrößen</span>
          </button>
          <button aria-label="Schließen" class="mr-1 mb-2"><svg class="size-2" viewBox="0 0 8 8"><path d="M.5 .5l7 7M7.5 .5l-7 7" stroke="#000" stroke-width="1.6" /></svg></button>
        </div>
      </div>
    </main>

    <footer class="h-[22px] shrink-0 border-t border-[#c6c6c6] bg-[#f3f2f1]"></footer>

    <script>
      const line = (id) => `<svg class="h-4 w-[19px]">${id.split("+").filter(Boolean).map((s) => `<use href="#${s}" />`).join("")}</svg>`;

      const checkbox = (id, checked) => `
        <span class="relative size-[13px]">
          <input id="${id}" type="checkbox" class="peer block size-[13px] appearance-none border border-[#333] bg-white" ${checked ? "checked" : ""} />
          <svg class="pointer-events-none absolute inset-0 hidden size-[13px] peer-checked:block"><use href="#check" /></svg>
        </span>`;

      // Navigation in the properties panel
      const pages = ["Grundparameter", "System", "Belastung", "Bemessung", "Ausgabe"];
      document.getElementById("nav-tree").innerHTML = pages
        .map((name, i) => {
          const icon = i === 0 ? "line-first" : i === pages.length - 1 ? "line-l" : "line-t";
          const active = name === "Ausgabe" ? "bg-[#9db3de] text-white" : "";
          return `<li class="flex h-4">${line(icon)}<a href="#" class="pr-1.5 pl-0.5 leading-4 ${active}">${name}</a></li>`;
        })
        .join("");

      // Property grid: [label, checked]
      const sections = [
        ["Allgemein", [["Kurzdruck", 0], ["Legenden", 1]]],
        ["Systemgrafik", [["Grafik", 1], ["Querschnittspunkte", 0], ["Koordinatensystem", 0], ["Masslinien", 0], ["Massstab vorgeben", 0, "0,0"]]],
        ["System", [["Grundparameter", 1], ["Material", 1], ["Querschnittsgeometrie", 1], ["Querschnittswerte", 0]]],
        ["Ergebnisse", [["Bemessungsschnittgrößen", 1]]],
        ["Ergebnisse Querschnitt", [["für alle Schnittgößen", 0], ["Nachweis Querschnitt", 1], ["Spannungen", 1], ["Ergebnisse Ersatzstabsystem", 0]]],
        ["Ersatzstabsystem", [["Geometrie Ersatzstabsystem", 0]]],
      ];
      document.getElementById("props").innerHTML = sections
        .map(([title, rows], s) => `
          <div class="flex h-[25px] items-center justify-between border-b border-[#d0d0d0] bg-[#e5e5e5] pr-[3px] pl-1">
            <h3 class="pt-px font-[Roboto,sans-serif] text-xs text-[#4f5163]">${title}</h3>
            <button aria-label="${title} zuklappen" class="size-[14px]"><svg class="size-[14px]"><use href="#collapse" /></svg></button>
          </div>
          ${rows.map(([label, checked, value], r) => `
            <div class="flex h-[21px] items-center border-b border-[#d0d0d0]">
              <label for="p${s}-${r}" class="h-full w-[154px] shrink-0 border-r border-[#d0d0d0] pl-[3px] leading-5">${label}</label>
              <span class="flex min-w-0 flex-1 items-center pl-1 text-[#888]">${value ? `<span class="w-[19px] shrink-0">[1:]</span><input aria-label="Massstab" value="${value}" class="mr-[3px] h-[14px] min-w-0 flex-1 bg-[#f0f0f0] text-right" />` : ""}</span>
              <span class="mr-[3px] shrink-0">${checkbox(`p${s}-${r}`, checked)}</span>
            </div>`).join("")}`)
        .join("");

      // Document outline
      const outline = [
        ["Grundparameter", "line-first+box"],
        ["Bemessungsnorm", "line-v", "line-l"],
        ["System", "line-t+box"],
        ["Systemgrafik", "line-v", "line-t"],
        ["Querschnitt", "line-v", "line-t"],
        ["Material", "line-v", "line-l"],
        ["Bemessung", "line-t+box"],
        ["Bemessungsparameter", "line-v", "line-l"],
        ["Belastung", "line-t+box"],
        ["Schnittgrössen", "line-v", "line-l"],
        ["Ergebnisse", "line-l+box"],
        ["Kombination  1", "", "line-l+box"],
        ["Nachweis Querschnitt", "", "", "line-t"],
        ["Spannungen", "", "", "line-l"],
      ];
      document.getElementById("content-tree").innerHTML = outline
        .map(([name, ...cells], i) => `
          <li class="flex h-4 items-center">${cells.map(line).join("")}${checkbox(`o${i}`, true)}
            <label for="o${i}" class="pl-px leading-4 whitespace-pre">${name}</label>
          </li>`)
        .join("");

      // Value rows: name, symbol, relation, value, unit, symbol, relation, value, unit
      const sub = (t) => t.replace(/_(\S+)/g, '<small class="text-[9px] leading-none">$1</small>');
      const align = ["", "text-right", "text-center", "text-right", "pl-[7px]", "text-right", "text-center", "text-right", "pl-[7px]"];
      const fill = (id, rows) => {
        document.getElementById(id).innerHTML = rows
          .map((row) => row.length === 1
            ? `<span class="col-span-full h-[13px]">${sub(row[0])}</span>`
            : row.map((t, i) => `<span class="h-[13px] whitespace-nowrap ${align[i]}">${sub(t)}</span>`).join(""))
          .join("");
      };
      fill("material", [
        ["", "E_k", "=", "210000", "N/mm²", "G_k", "=", "80769", "N/mm²"],
        ["", "γ", "=", "78.50", "kN/m³", "μ", "=", "0.30", ""],
        ["Streckgrenze", "t", "≤", "4.0", "cm", "f_yk", "=", "235.00", "N/mm²"],
        ["", "t", "≤", "8.0", "cm", "f_yk", "=", "215.00", "N/mm²"],
        ["Zugfestigkeit", "t", "≤", "4.0", "cm", "f_uk", "=", "360.00", "N/mm²"],
        ["", "t", "≤", "8.0", "cm", "f_uk", "=", "360.00", "N/mm²"],
      ]);
      fill("results", [
        ["M_y", "M_yd", "=", "150.00", "kNm", "M_ypl", "=", "440.21", "kNm"],
        ["", "M_yRd", "=", "407.77", "kNm", "ηM_y", "=", "0.37", ""],
        ["Eine Abminderung von fy und damit M_y,Rd bei Biegung und Querkraft nach (6.29)"],
        ["Faktor fy", "1-py_red", "=", "0.31", "", "", "", "", ""],
        ["V_z", "V_zd", "=", "500.0", "kN", "V_zpl", "=", "643.8", "kN"],
        ["", "V_zRd", "=", "643.8", "kN", "ηV_z", "=", "0.78", ""],
      ]);

      document.getElementById("legend").innerHTML = [
        ["Bezeichnung", "Bezeichnung der Schnittgrößenkombination"],
        ["N<small>d</small>", "Normalkraft"],
        ["M<small>yd</small>", "Moment um die y-Achse"],
        ["V<small>zd</small>", "Querkraft in z-Richtung"],
        ["M<small>zd</small>", "Moment um die z-Achse"],
        ["V<small>yd</small>", "Querkraft in y-Richtung"],
        ["η", "Auslastung"],
      ].map(([k, v]) => `<span class="h-[9px]">${k}</span><span>:</span><span>${v}</span>`).join("");

      // Rulers, 21 cm across the page width
      const cm = 770 / 21;
      let marks = "";
      for (let i = 0; i <= 21; i++) {
        const x = i * cm;
        marks += `<text x="${x}" y="11" text-anchor="middle">${i}</text>
          <path d="M${Math.round(x + cm / 4)}.5 6v3M${Math.round(x + cm / 2)}.5 5v5M${Math.round(x + (cm * 3) / 4)}.5 6v3" stroke="#000" />`;
      }
      document.getElementById("ruler-h").innerHTML = marks;

      marks = "";
      for (let i = 3; i <= 19; i++) {
        const y = 22 + (i - 4) * cm;
        marks += `<text transform="translate(11 ${y}) rotate(-90)" text-anchor="middle">${i}</text>
          <path d="M6 ${Math.round(y + cm / 4)}.5h3M5 ${Math.round(y + cm / 2)}.5h5M6 ${Math.round(y + (cm * 3) / 4)}.5h3" stroke="#000" />`;
      }
      document.getElementById("ruler-v").innerHTML = marks;
    </script>
  </body>
</html>
